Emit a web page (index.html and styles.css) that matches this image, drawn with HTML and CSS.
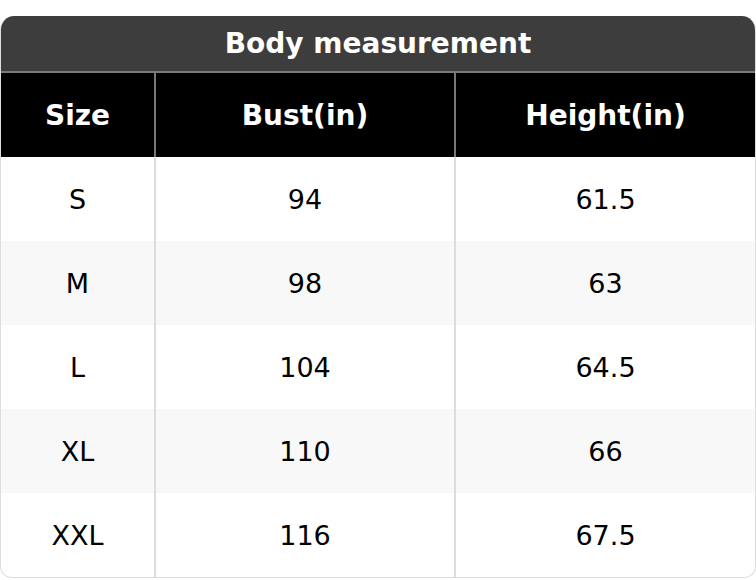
FILE: index.html
```html
<!DOCTYPE html>
<html>
<head>
<meta charset="utf-8">
<link rel="stylesheet" href="styles.css">
</head>
<body>
<div class="card">
  <div class="title">Body measurement</div>
  <table class="sizes">
    <colgroup><col class="c1"><col class="c2"><col class="c3"></colgroup>
    <thead>
      <tr><th>Size</th><th>Bust(in)</th><th>Height(in)</th></tr>
    </thead>
    <tbody>
      <tr><td>S</td><td>94</td><td>61.5</td></tr>
      <tr><td>M</td><td>98</td><td>63</td></tr>
      <tr><td>L</td><td>104</td><td>64.5</td></tr>
      <tr><td>XL</td><td>110</td><td>66</td></tr>
      <tr><td>XXL</td><td>116</td><td>67.5</td></tr>
    </tbody>
  </table>
</div>
</body>
</html>
```

FILE: styles.css
```css
html, body {
  margin: 0;
  padding: 0;
  background: #ffffff;
}
body {
  padding-top: 16px;
  font-family: "DejaVu Sans", sans-serif;
}
.card {
  width: 754px;
  margin: 0 auto;
  border: 1px solid #dddddd;
  border-top: none;
  border-radius: 14px 14px 12px 12px;
  overflow: hidden;
}
.title {
  background: #3d3d3d;
  color: #ffffff;
  font-weight: bold;
  font-size: 28px;
  display: flex;
  align-items: center;
  justify-content: center;
  border-bottom: 2px solid #7a7a7a;
  box-sizing: border-box;
  height: 57px;
}
.sizes {
  width: 100%;
  border-collapse: collapse;
  table-layout: fixed;
}
.c1 { width: 154px; }
.c2 { width: 300px; }
.sizes th {
  background: #000000;
  color: #ffffff;
  font-weight: bold;
  font-size: 28px;
  height: 84px;
  padding: 0;
}
.sizes td {
  font-size: 27px;
  color: #000000;
  height: 84px;
  padding: 0;
  text-align: center;
}
.sizes th + th {
  border-left: 2px solid #777777;
}
.sizes td + td {
  border-left: 2px solid #dddddd;
}
.sizes tbody tr:nth-child(even) td {
  background: #f8f8f8;
}
```
